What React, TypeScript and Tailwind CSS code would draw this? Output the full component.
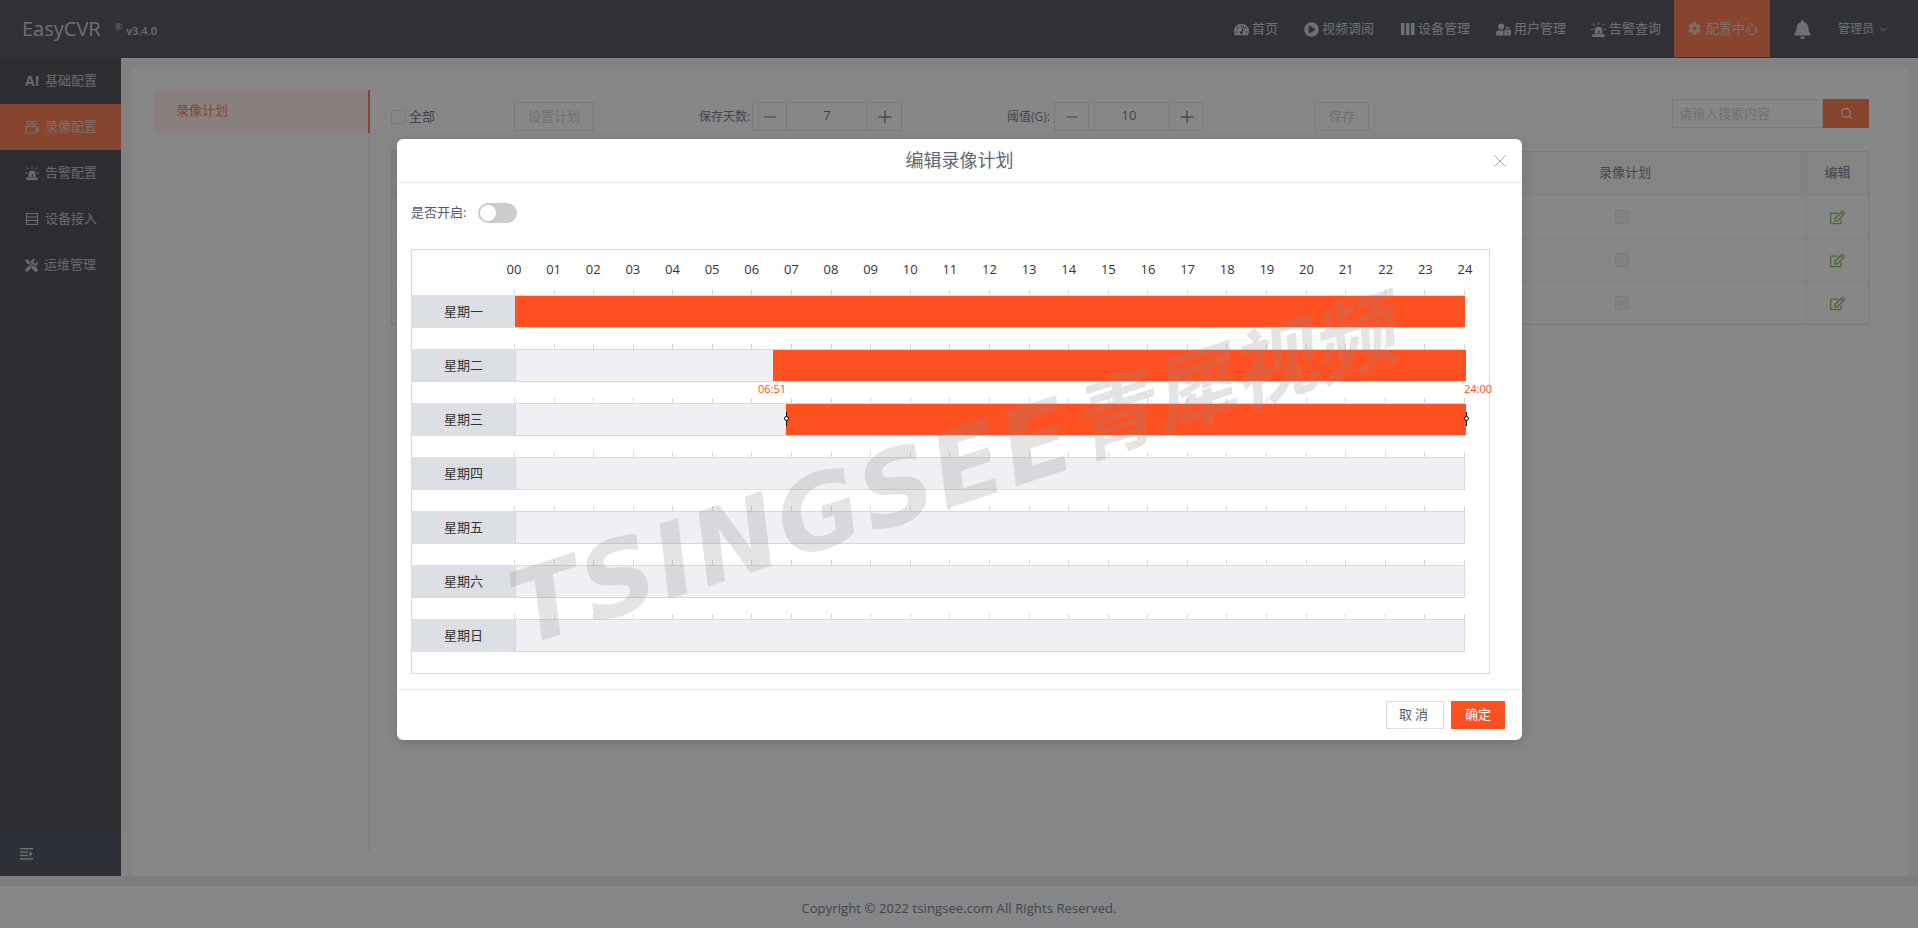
import { FaBell, FaCog, FaPlayCircle, FaRegEdit, FaTachometerAlt, FaTools, FaUserLock } from "react-icons/fa";
import { LuChevronDown, LuMinus, LuPlus, LuSearch, LuX } from "react-icons/lu";

const hours = Array.from({ length: 25 }, (_, i) => String(i).padStart(2, "0"));
const ticks = Array.from({ length: 25 }, (_, i) => i);

const days = [
  { name: "星期一", start: 515, end: 1465 },
  { name: "星期二", start: 773, end: 1466 },
  { name: "星期三", start: 786, end: 1466, active: true },
  { name: "星期四" },
  { name: "星期五" },
  { name: "星期六" },
  { name: "星期日" },
];

function SirenIcon({ className }: { className?: string }) {
  return (
    <svg viewBox="0 0 16 16" className={className} fill="currentColor">
      <rect x="1.5" y="13" width="13" height="3" />
      <path d="M4 12.5V9a4 4 0 0 1 8 0v3.5h-3.4l1-3.6-2.6 2h1.4l-1 1.6z" />
      <path d="M7.5 0h1v3h-1zM1.4 2.1l.7-.7 2.1 2.1-.7.7zM13.9 1.4l.7.7-2.1 2.1-.7-.7zM0 7.5h2.5v1H0zM13.5 7.5H16v1h-2.5z" />
    </svg>
  );
}

function DeviceIcon({ className }: { className?: string }) {
  return (
    <svg viewBox="0 0 14 14" className={className} fill="currentColor">
      <rect x="0" y="1" width="3.5" height="12" />
      <rect x="5" y="1" width="3.5" height="12" />
      <rect x="10" y="1" width="3.5" height="12" />
    </svg>
  );
}

function CameraIcon({ className }: { className?: string }) {
  return (
    <svg viewBox="0 0 14 14" className={className} fill="none" stroke="currentColor" strokeWidth="1.2">
      <circle cx="4" cy="3" r="2" />
      <circle cx="9.5" cy="3" r="2" />
      <path d="M1 6.5h10v6.5H1zM11 9l2.5-1.2v3.4L11 10" />
    </svg>
  );
}

function ListIcon({ className }: { className?: string }) {
  return (
    <svg viewBox="0 0 14 14" className={className} fill="none" stroke="currentColor" strokeWidth="1.2">
      <path d="M1.5 1.5h11v11h-11zM1.5 5h11M1.5 8.5h11" />
    </svg>
  );
}

function CollapseIcon({ className }: { className?: string }) {
  return (
    <svg viewBox="0 0 14 12" className={className} fill="currentColor">
      <rect x="0" y="0" width="13" height="1.4" />
      <rect x="0" y="3.4" width="8" height="1.4" />
      <rect x="0" y="6.8" width="8" height="1.4" />
      <rect x="0" y="10.2" width="13" height="1.4" />
      <path d="M9.5 3.2l3 2.8-3 2.8z" />
    </svg>
  );
}

const navItems = [
  { label: "首页", icon: <FaTachometerAlt className="size-[15px]" />, width: "w-[70px]" },
  { label: "视频调阅", icon: <FaPlayCircle className="size-[15px]" />, width: "w-[97px]" },
  { label: "设备管理", icon: <DeviceIcon className="size-[14px]" />, width: "w-[95px]" },
  { label: "用户管理", icon: <FaUserLock className="size-[15px]" />, width: "w-[95px]" },
  { label: "告警查询", icon: <SirenIcon className="size-[15px]" />, width: "w-[83px]" },
];

const sideItems = [
  { label: "基础配置", icon: <span className="w-[14px] text-[14px] font-bold leading-none">AI</span> },
  { label: "录像配置", icon: <CameraIcon className="size-[14px]" />, active: true },
  { label: "告警配置", icon: <SirenIcon className="size-[14px]" /> },
  { label: "设备接入", icon: <ListIcon className="size-[14px]" /> },
  { label: "运维管理", icon: <FaTools className="size-[13px]" /> },
];

function Stepper({ value }: { value: string }) {
  return (
    <div className="flex h-[29px] w-[150px] border border-[#dcdee2] text-[#515a6e]">
      <div className="flex w-[34px] items-center justify-center border-r border-[#dcdee2]">
        <LuMinus className="size-[18px] stroke-[1.6]" />
      </div>
      <div className="flex-1 pt-[2px] text-center text-[13px] leading-[20px]">{value}</div>
      <div className="flex w-[34px] items-center justify-center border-l border-[#dcdee2]">
        <LuPlus className="size-[20px] stroke-[1.6]" />
      </div>
    </div>
  );
}

function TableRow({ checked }: { checked?: boolean }) {
  return (
    <div className="grid h-[43px] grid-cols-[1fr_362px_62px] border-t border-[#e8eaec]">
      <div />
      <div className="flex items-center justify-center pr-[6px]">
        <span className="flex size-[14px] items-center justify-center rounded-[2px] border border-[#dcdee2] bg-[#f3f3f3] text-[10px] leading-none text-[#c5c8ce]">
          {checked ? "✓" : ""}
        </span>
      </div>
      <div className="flex items-center justify-center border-l border-[#e8eaec] text-[#5fb333]">
        <FaRegEdit className="size-[15px]" />
      </div>
    </div>
  );
}

function Handle({ className }: { className: string }) {
  return (
    <div className={`absolute top-[15px] h-[14px] w-px -translate-y-1/2 bg-black ${className}`}>
      <div className="absolute left-[-2px] top-[4px] size-[5px] rounded-full border border-black bg-white" />
    </div>
  );
}

export default function App() {
  return (
    <div className="relative flex h-[928px] w-[1918px] flex-col overflow-hidden bg-[#fafcff] font-['Open_Sans','Noto_Sans_CJK_SC',sans-serif] text-[13px] text-[#515a6e]">
      <header className="flex h-[58px] items-center bg-[#232938] pl-[22px] text-[#c0c2c6]">
        <span className="text-[20px] leading-none">EasyCVR</span>
        <span className="ml-[14px] mt-[-6px] text-[9px] leading-none">®</span>
        <span className="ml-[4px] mt-[3px] text-[11px] font-semibold leading-none">v3.4.0</span>
        <nav className="ml-auto flex h-full items-center">
          {navItems.map((item) => (
            <div key={item.label} className={`flex items-center gap-[3px] ${item.width}`}>
              {item.icon}
              <span className="whitespace-nowrap">{item.label}</span>
            </div>
          ))}
          <div className="flex h-[57px] w-[96px] items-center gap-[5px] self-start bg-[#ff5722] pl-[14px] text-[#e0c0b8]">
            <FaCog className="size-[13px]" />
            <span>配置中心</span>
          </div>
          <FaBell className="ml-[23px] size-[19px]" />
          <span className="ml-[26px] text-[12px]">管理员</span>
          <LuChevronDown className="ml-[4px] mr-[29px] size-[11px]" />
        </nav>
      </header>

      <div className="flex h-[818px]">
        <aside className="flex w-[121px] flex-col bg-[#1e202a] text-[#b4b4b4]">
          <div className="flex-1">
            {sideItems.map((item) => (
              <div
                key={item.label}
                className={`flex h-[46px] items-center gap-[6px] pl-[25px] ${item.active ? "bg-[#ff5722] text-[#e0c0b8]" : ""}`}
              >
                {item.icon}
                <span>{item.label}</span>
              </div>
            ))}
          </div>
          <div className="flex h-[45px] items-center bg-[#1e2636] pl-[20px]">
            <CollapseIcon className="h-[12px] w-[14px] text-[#c8c8c8]" />
          </div>
        </aside>

        <main className="flex-1 bg-[#f2f2f2] pb-0 pl-[11px] pr-[10px] pt-[10px]">
          <div className="flex h-full bg-white pb-[23px] pl-[22px] pr-[39px] pt-[22px]">
            <div className="w-[216px] border-r border-[#dcdee2]">
              <div className="mr-[-1px] flex h-[43px] items-center border-r-2 border-[#ff5722] bg-[#ffeee6] pb-[2px] pl-[22px] text-[#ff5722]">
                录像计划
              </div>
            </div>

            <div className="flex-1 pl-[21px]">
              <div className="flex items-start pt-[9px]">
                <div className="mt-[3px] flex h-[29px] w-[123px] items-center gap-[4px]">
                  <span className="size-[14px] border border-[#dcdee2] bg-white" />
                  <span>全部</span>
                </div>
                <div className="mt-[3px] flex h-[29px] w-[80px] items-center justify-center border border-[#dcdee2] text-[#c5c8ce]">设置计划</div>
                <div className="mt-[3px] ml-[105px] flex h-[29px] items-center gap-[4px]">
                  <span className="w-[49px] whitespace-nowrap text-[12px]">保存天数:</span>
                  <Stepper value="7" />
                </div>
                <div className="mt-[3px] ml-[105px] flex h-[29px] items-center gap-[2px]">
                  <span className="w-[45px] whitespace-nowrap text-[12px]">阈值(G):</span>
                  <Stepper value="10" />
                </div>
                <div className="mt-[3px] ml-[111px] flex h-[29px] w-[54px] items-center justify-center border border-[#dcdee2] text-[#c5c8ce]">保存</div>
                <div className="ml-auto flex h-[29px] w-[197px]">
                  <div className="flex flex-1 items-center border border-[#dcdee2] pl-[6px] text-[#c5c8ce]">请输入搜索内容</div>
                  <div className="flex w-[46px] items-center justify-center bg-[#ff5722] text-white">
                    <LuSearch className="size-[13px]" />
                  </div>
                </div>
              </div>

              <div className="mt-[20px] border border-[#dcdee2]">
                <div className="grid h-[43px] grid-cols-[1fr_362px_62px] bg-[#f8f8f9]">
                  <div />
                  <div className="flex items-center justify-center pb-[2px]">录像计划</div>
                  <div className="flex items-center justify-center border-l border-[#e8eaec] pb-[2px]">编辑</div>
                </div>
                <TableRow />
                <TableRow />
                <TableRow checked />
              </div>
            </div>
          </div>
        </main>
      </div>

      <div className="h-[10px] bg-[#e6e6e6]" />
      <footer className="flex flex-1 items-center justify-center pt-[3px] tracking-[0.1px] text-[#515a6e]">
        Copyright © 2022 tsingsee.com All Rights Reserved.
      </footer>

      {/* modal mask */}
      <div className="absolute inset-0 bg-[rgba(55,55,55,0.6)]" />

      <div className="absolute left-[397px] top-[139px] w-[1125px] overflow-hidden rounded-[6px] bg-white shadow-[0_4px_12px_rgba(0,0,0,0.15)]">
        <div className="relative flex h-[44px] items-center justify-center border-b border-[#e8eaec] text-[18px] text-[#5f6778]">
          编辑录像计划
          <LuX className="absolute right-[12px] top-[12px] size-[20px] stroke-1 text-[#999]" />
        </div>

        <div className="px-[14px] pt-[20px]">
          <div className="flex h-[20px] items-center">
            <span className="w-[67px]">是否开启:</span>
            <div className="flex h-[20px] w-[39px] items-center rounded-full bg-[#ccc] pl-[2px]">
              <span className="size-[16px] rounded-full bg-white" />
            </div>
          </div>

          <div className="mt-[26px] h-[425px] w-[1079px] border border-[#d5dae2] text-[#333]">
            <div className="ml-[92px] flex h-[40px] w-[971px] items-center justify-between">
              {hours.map((h) => (
                <span key={h} className="w-[20px] text-center">{h}</span>
              ))}
            </div>
            {days.map((day) => (
              <div key={day.name} className="mb-[16px]">
                <div className="ml-[102px] flex h-[5px] w-[951px] justify-between">
                  {ticks.map((t) => (
                    <span key={t} className="w-px bg-[#d3d8df]" />
                  ))}
                </div>
                <div className="flex h-[33px]">
                  <div className="flex w-[103px] items-center justify-center bg-[#dcdfe3]">{day.name}</div>
                  <div className="relative w-[950px] border-x border-y border-[#d5dae2] bg-[#eef0f4]">
                    {day.start && (
                      <div
                        className="absolute bottom-0 top-0 bg-[#ff5022]"
                        style={{ left: day.start - 516, width: day.end - day.start }}
                      />
                    )}
                    {day.active && (
                      <>
                        <span className="absolute left-[256px] top-[-22px] -translate-x-1/2 whitespace-nowrap text-[11px] leading-[14px] text-[#ff5022]">06:51</span>
                        <span className="absolute left-[962px] top-[-22px] -translate-x-1/2 whitespace-nowrap text-[11px] leading-[14px] text-[#ff5022]">24:00</span>
                        <Handle className="left-[270px]" />
                        <Handle className="left-[950px]" />
                      </>
                    )}
                  </div>
                </div>
              </div>
            ))}
          </div>
        </div>

        <div className="mt-[15px] flex h-[51px] justify-end gap-[7px] border-t border-[#e8eaec] pr-[17px] pt-[11px]">
          <div className="flex h-[28px] w-[58px] items-center justify-center border border-[#dcdee2] tracking-[3px] text-[#515a6e]">取消</div>
          <div className="flex h-[28px] w-[54px] items-center justify-center bg-[#ff5022] text-white">确定</div>
        </div>

        {/* watermark */}
        <div className="pointer-events-none absolute left-[556px] top-[331px] flex -translate-x-1/2 -translate-y-1/2 -rotate-[18deg] items-center whitespace-nowrap font-['DejaVu_Sans','Noto_Sans_CJK_SC',sans-serif] font-bold italic leading-none text-[rgba(141,141,141,0.24)]">
          <span className="text-[102px] tracking-[3px]">TSINGSEE</span>
          <span className="text-[84px]">青犀视频</span>
        </div>
      </div>
    </div>
  );
}
